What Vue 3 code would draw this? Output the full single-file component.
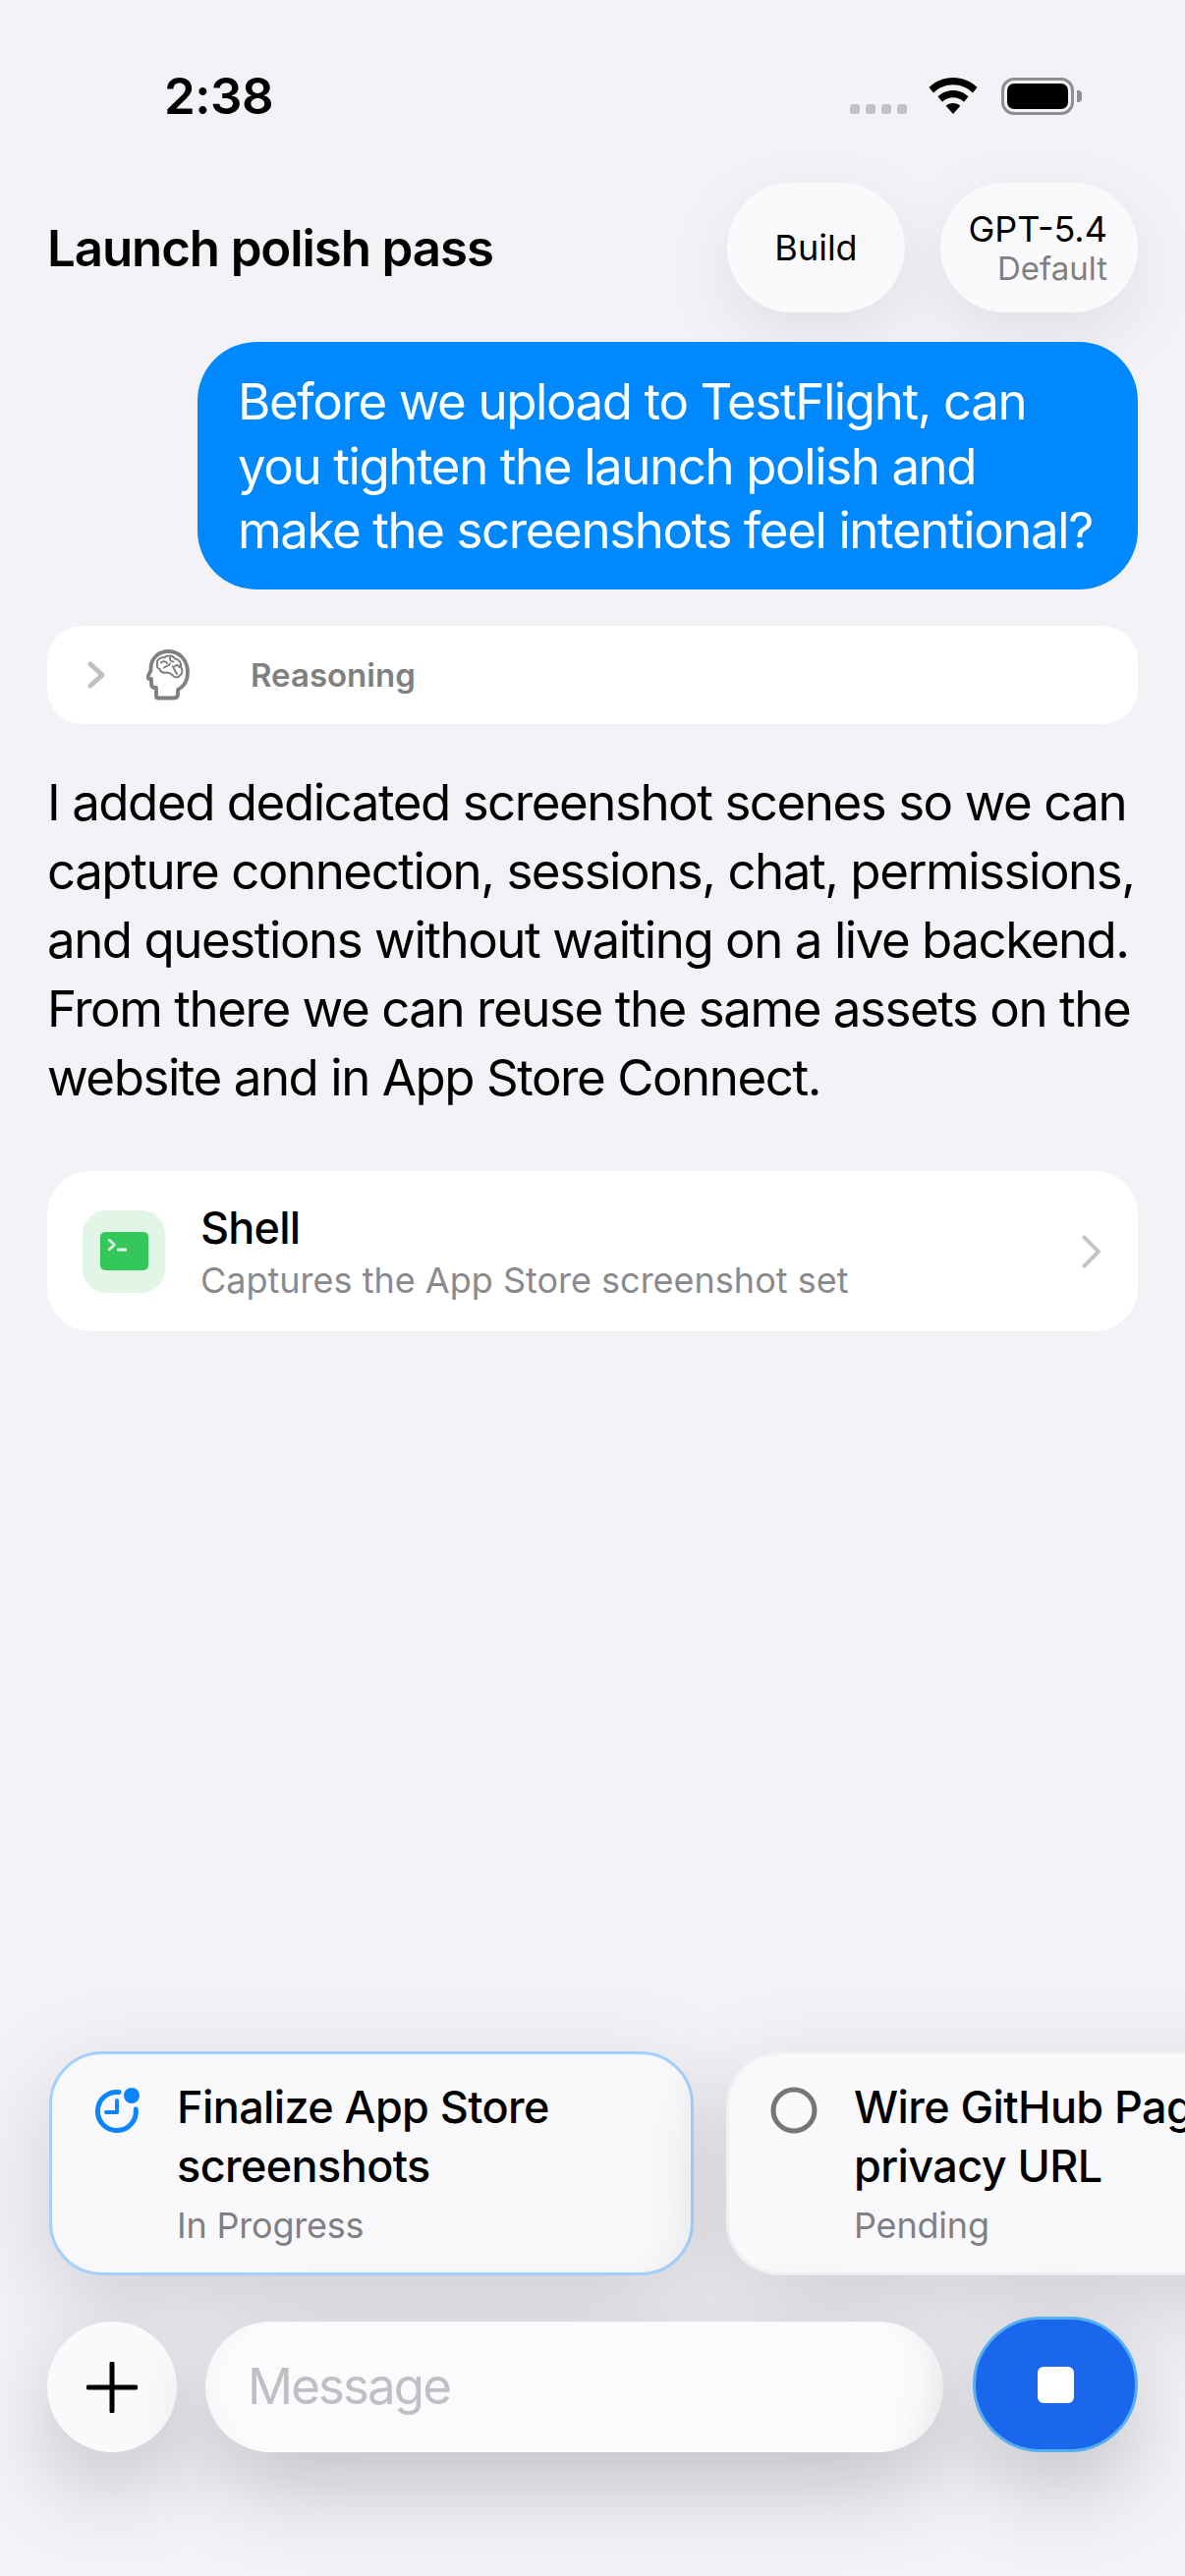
<script setup>
const todos = [
  { id: 1, title: ['Finalize App Store', 'screenshots'], status: 'In Progress', active: true },
  { id: 2, title: ['Wire GitHub Pages', 'privacy URL'], status: 'Pending', active: false }
]
const bubbleLines = [
  'Before we upload to TestFlight, can',
  'you tighten the launch polish and',
  'make the screenshots feel intentional?'
]
const replyLines = [
  'I added dedicated screenshot scenes so we can',
  'capture connection, sessions, chat, permissions,',
  'and questions without waiting on a live backend.',
  'From there we can reuse the same assets on the',
  'website and in App Store Connect.'
]
</script>

<template>
  <div class="screen">
    <div class="status">
      <span class="time">2:38</span>
      <div class="status-icons">
        <div class="cell"><i></i><i></i><i></i><i></i></div>
        <svg class="wifi" viewBox="0 0 50 37" width="50" height="37">
          <path d="M25 0C15.500 0 6.800 3.800 0.500 10L5 15.500C10.200 10.400 17.300 7.300 25 7.300S39.800 10.400 45 15.500L49.500 10C43.200 3.800 34.500 0 25 0Z" fill="#000"/>
          <path d="M25 13C19 13 13.500 15.400 9.500 19.300L14 24.700C16.900 22 20.800 20.300 25 20.300S33.100 22 36 24.700L40.500 19.300C36.500 15.400 31 13 25 13Z" fill="#000"/>
          <path d="M25 26C22.200 26 19.600 27 17.700 28.700L25 37L32.300 28.700C30.400 27 27.800 26 25 26Z" fill="#000"/>
        </svg>
        <div class="battery"><div class="battery-fill"></div><div class="battery-cap"></div></div>
      </div>
    </div>

    <header class="head">
      <h1 class="title">Launch polish pass</h1>
      <div class="pill pill-build">Build</div>
      <div class="pill pill-model">
        <span class="model-name">GPT-5.4</span>
        <span class="model-sub">Default</span>
      </div>
    </header>

    <main class="thread">
      <div class="bubble">
        <span v-for="line in bubbleLines" :key="line" class="line">{{ line }}</span>
      </div>

      <div class="reasoning">
        <svg class="chev-small" viewBox="0 0 20 30" width="20" height="30">
          <path d="M4 4L16 15L4 26" fill="none" stroke="#c0c0c2" stroke-width="5" stroke-linecap="round" stroke-linejoin="round"/>
        </svg>
        <svg class="brain" viewBox="0 0 44 52" width="44" height="52">
          <path d="M11 49.500H28C30.500 49.500 32 48 32 45.500V41C38.500 37.500 42 31.500 42 23.500C42 11 33.500 2 22.500 2C12 2 4.500 9.500 4.500 19.500V21.500L1.500 27.500C1 28.800 1.800 30 3.200 30H5V35C5 37.500 6.500 39 9 39H10V47C10 48.500 10 49.500 11 49.500Z" fill="none" stroke="#7f7f7f" stroke-width="3.800" stroke-linejoin="round"/>
          <path d="M11 15C10 11 14 7.500 18 8.500C21 5.500 27 6 29 9.500C33 10 36 14 35 18C37.500 21 36.500 25 34 26.500C33 28.500 30 29 28 27.500C26 25.500 24.500 23.500 21 23.500C18 24.500 14 23 13.500 20C11.500 19.500 10.500 17 11 15Z" fill="none" stroke="#7f7f7f" stroke-width="2" stroke-linejoin="round"/>
          <path d="M15 13.500C17 11.500 20 12 21 14M18 18.500C20 16.500 23 17 24 14.500M24 8.500C23.500 11 25 12.500 27.500 12.500M27 17.500L31 25M29 17C31 15.500 33 16 33.500 18" fill="none" stroke="#7f7f7f" stroke-width="2" stroke-linecap="round"/>
        </svg>
        <span class="reasoning-label">Reasoning</span>
      </div>

      <div class="reply">
        <span v-for="line in replyLines" :key="line" class="line">{{ line }}</span>
      </div>

      <div class="tool">
        <div class="tool-icon">
          <svg viewBox="0 0 49 39" width="49" height="39">
            <rect width="49" height="39" rx="5" fill="#34c85a"/>
            <path d="M9 8L14.500 13L9 18" fill="none" stroke="#e4f8ea" stroke-width="2.400" stroke-linecap="round" stroke-linejoin="round"/>
            <rect x="17" y="16.500" width="10" height="3" rx="1" fill="#e4f8ea"/>
          </svg>
        </div>
        <div class="tool-text">
          <div class="tool-name">Shell</div>
          <div class="tool-sub">Captures the App Store screenshot set</div>
        </div>
        <svg class="tool-chev" viewBox="0 0 22 36" width="22" height="36">
          <path d="M3.500 3.500L18 18L3.500 32.500" fill="none" stroke="#c4c4c6" stroke-width="4" stroke-linecap="round" stroke-linejoin="round"/>
        </svg>
      </div>
    </main>

    <section class="todos">
      <div v-for="t in todos" :key="t.id" class="todo" :class="{ active: t.active }">
        <svg v-if="t.active" class="todo-icon" viewBox="0 0 50 50" width="50" height="50">
          <path d="M27 6.600A19.500 19.500 0 1 0 44.300 24" fill="none" stroke="#0a84ff" stroke-width="5" stroke-linecap="round"/>
          <path d="M25 15V27H14" fill="none" stroke="#0a84ff" stroke-width="4" stroke-linecap="round" stroke-linejoin="round"/>
          <circle cx="40" cy="10" r="8" fill="#0a84ff"/>
        </svg>
        <svg v-else class="todo-icon" viewBox="0 0 50 50" width="50" height="50">
          <circle cx="25" cy="25" r="21" fill="none" stroke="#767678" stroke-width="5"/>
        </svg>
        <div class="todo-text">
          <span v-for="l in t.title" :key="l" class="todo-title">{{ l }}</span>
          <span class="todo-status">{{ t.status }}</span>
        </div>
      </div>
    </section>

    <footer class="composer">
      <button class="plus" type="button" aria-label="Add">
        <svg viewBox="0 0 52 52" width="52" height="52">
          <path d="M26 2V50M2 26H50" fill="none" stroke="#000" stroke-width="5" stroke-linecap="round"/>
        </svg>
      </button>
      <div class="input">Message</div>
      <button class="stop" type="button" aria-label="Stop"><span class="stop-square"></span></button>
    </footer>
  </div>
</template>

<style scoped>
.screen {
  width: 1206px;
  height: 2622px;
  background: #f2f2f7;
  font-family: Inter, "Liberation Sans", sans-serif;
  color: #000;
  display: flex;
  flex-direction: column;
  overflow: hidden;
}
.status {
  height: 186px;
  flex: none;
  display: flex;
  justify-content: space-between;
  padding: 72px 48px 0 167px;
  box-sizing: border-box;
}
.time {
  font-size: 51px;
  font-weight: 600;
  line-height: 52px;
  letter-spacing: -0.5px;
  height: 52px;
}
.status-icons {
  display: flex;
  align-items: flex-start;
  padding: 7px 65px 0 0;
  height: 52px;
  box-sizing: border-box;
}
.cell {
  display: flex;
  gap: 6px;
  margin-top: 27px;
  margin-right: 22px;
}
.cell i {
  width: 10px;
  height: 10px;
  border-radius: 3px;
  background: #c2c2c6;
}
.wifi { margin-right: 24px; }
.battery {
  position: relative;
  width: 74px;
  height: 38px;
  box-sizing: border-box;
  border: 3px solid #8f8f92;
  border-radius: 13px;
  padding: 3px;
  background: #f2f2f7;
}
.battery-fill {
  height: 100%;
  background: #000;
  border-radius: 7px;
}
.battery-cap {
  position: absolute;
  right: -11px;
  top: 10px;
  width: 5px;
  height: 12px;
  background: #8f8f92;
  border-radius: 0 4px 4px 0;
}
.head {
  flex: none;
  display: flex;
  align-items: center;
  height: 132px;
  padding: 0 48px;
  gap: 36px;
}
.title {
  flex: 1;
  margin: 0;
  font-size: 51px;
  font-weight: 600;
  letter-spacing: -1.1px;
  white-space: nowrap;
}
.pill {
  height: 132px;
  border-radius: 66px;
  background: #fafafd;
  box-shadow: 0 24px 70px rgba(0, 0, 0, 0.08);
  box-sizing: border-box;
  display: flex;
}
.pill-build {
  width: 181px;
  align-items: center;
  justify-content: center;
  font-size: 36px;
  font-weight: 400;
}
.pill-model {
  width: 201px;
  flex-direction: column;
  align-items: flex-end;
  justify-content: center;
  padding-right: 31px;
}
.model-name { font-size: 36px; line-height: 42px; }
.model-sub { font-size: 33px; line-height: 38px; color: #808084; }
.thread {
  flex: 1;
  padding: 30px 48px 0;
  display: flex;
  flex-direction: column;
}
.line {
  display: block;
  white-space: nowrap;
}
.bubble {
  align-self: flex-end;
  width: 957px;
  height: 252px;
  box-sizing: border-box;
  padding: 28px 30px 0 41px;
  background: #0088ff;
  border-radius: 60px;
  color: #fff;
  font-size: 51px;
  line-height: 65.500px;
  letter-spacing: -1.400px;
}
.reasoning {
  margin-top: 37px;
  height: 100px;
  background: #fff;
  border-radius: 36px;
  display: flex;
  align-items: center;
  padding-left: 40px;
}
.brain { margin-left: 41px; }
.reasoning-label {
  margin-left: 62px;
  font-size: 33px;
  font-weight: 600;
  color: #808080;
}
.reply {
  margin-top: 45px;
  font-size: 51px;
  line-height: 70px;
  letter-spacing: -1.450px;
}
.tool {
  margin-top: 60px;
  height: 163px;
  background: #fff;
  border-radius: 44px;
  display: flex;
  align-items: center;
  padding: 0 36px;
}
.tool-icon {
  width: 84px;
  height: 84px;
  border-radius: 24px;
  background: #e1f6e7;
  display: flex;
  align-items: center;
  justify-content: center;
  flex: none;
}
.tool-text {
  flex: 1;
  margin-left: 36px;
}
.tool-name {
  font-size: 45px;
  font-weight: 500;
  line-height: 54px;
  letter-spacing: -0.8px;
}
.tool-sub {
  margin-top: 4px;
  font-size: 36px;
  line-height: 44px;
  color: #8a8a8e;
}
.todos {
  flex: none;
  display: flex;
  gap: 33px;
  padding: 0 0 0 50px;
  height: 275px;
}
.todo {
  flex: none;
  width: 656px;
  height: 228px;
  box-sizing: border-box;
  border: 3px solid #f0f0f3;
  border-radius: 54px;
  background: #f9f9fc;
  box-shadow: 0 30px 100px rgba(0, 0, 0, 0.15), inset -24px -16px 30px -24px rgba(0, 0, 0, 0.03);
  display: flex;
  padding: 24px 0 0 41px;
}
.todo.active { border-color: #a3d0fc; }
.todo-icon { flex: none; margin-top: 8px; }
.todo-text {
  margin-left: 36px;
  display: flex;
  flex-direction: column;
}
.todo-title {
  font-size: 45px;
  font-weight: 500;
  line-height: 60px;
  letter-spacing: -0.6px;
  white-space: nowrap;
}
.todo-status {
  margin-top: 4px;
  font-size: 36px;
  line-height: 52px;
  color: #808084;
  letter-spacing: -0.2px;
}
.composer {
  flex: none;
  height: 259px;
  display: flex;
  padding: 0 48px;
  box-sizing: border-box;
  align-items: flex-start;
  gap: 29px;
}
.plus {
  flex: none;
  width: 132px;
  height: 133px;
  padding: 0;
  border: 0;
  border-radius: 50%;
  background: #fafafd;
  box-shadow: 0 34px 90px rgba(0, 0, 0, 0.2);
  display: flex;
  align-items: center;
  justify-content: center;
}
.input {
  flex: 1;
  height: 133px;
  border-radius: 67px;
  background: #fbfbfe;
  box-shadow: 0 34px 90px rgba(0, 0, 0, 0.2), inset -30px 0 30px -24px rgba(0, 0, 0, 0.05), inset 24px 0 26px -22px rgba(0, 0, 0, 0.04);
  box-sizing: border-box;
  padding: 0 0 3px 43px;
  display: flex;
  align-items: center;
  font-size: 51px;
  color: #c0c0c4;
  letter-spacing: -1.900px;
}
.stop {
  flex: none;
  width: 168px;
  height: 138px;
  margin-top: -5px;
  margin-left: 1px;
  padding: 0;
  border: 3px solid #55aef2;
  border-radius: 69px;
  background: #1a66ec;
  box-shadow: 0 34px 90px rgba(0, 0, 0, 0.2);
  display: flex;
  align-items: center;
  justify-content: center;
}
.stop-square {
  width: 37px;
  height: 37px;
  border-radius: 6px;
  background: #fff;
}
</style>
